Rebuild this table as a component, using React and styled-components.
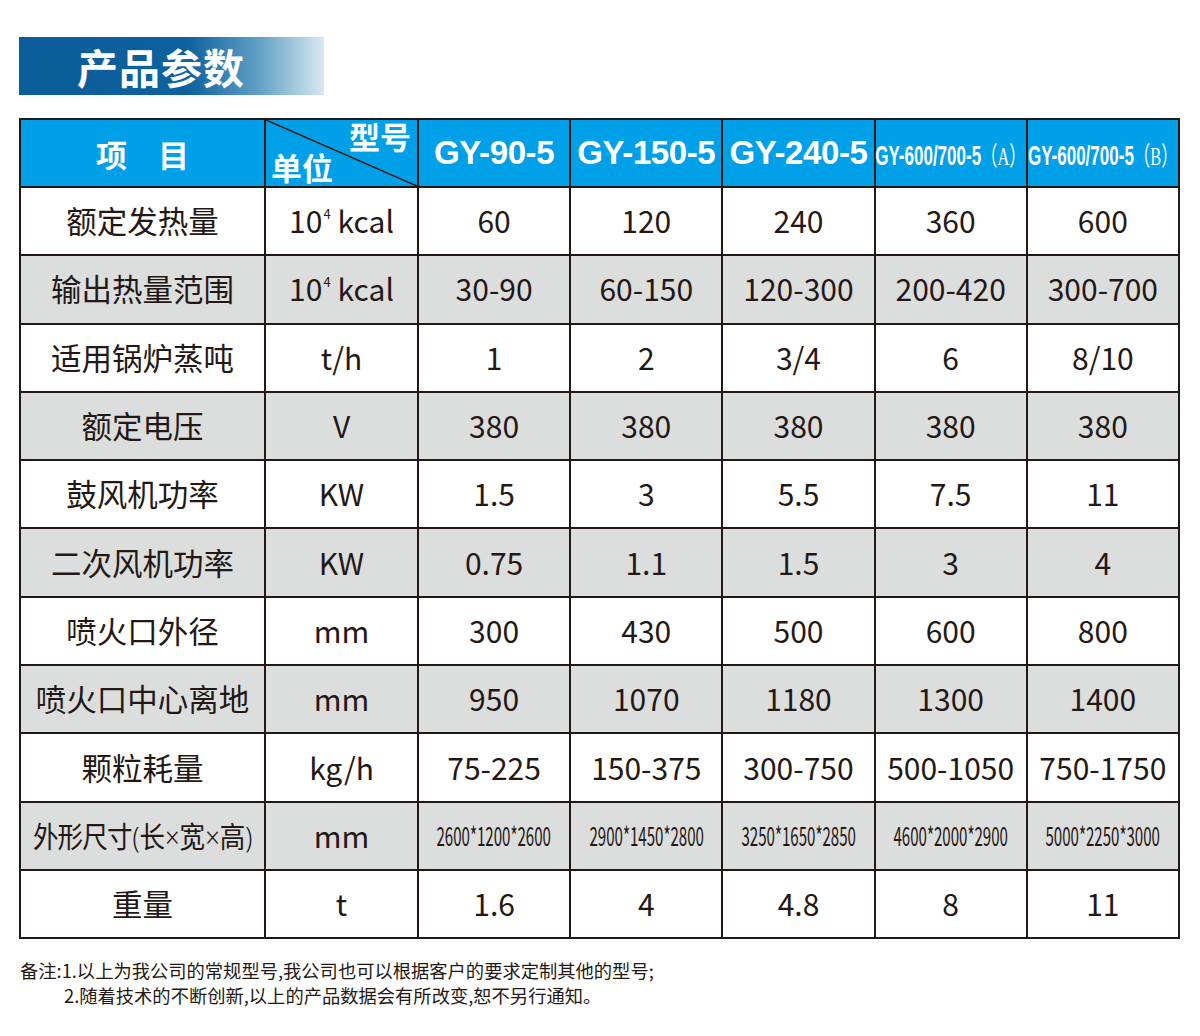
import React from 'react'
import styled, { createGlobalStyle } from 'styled-components'

const GlobalStyle = createGlobalStyle`
    body {
        margin: 0;
        background: #ffffff;
        font-family: "Noto Sans CJK SC", "Noto Sans", sans-serif;
        color: #231815;
    }
`

const models = [
    { name: 'GY-90-5' },
    { name: 'GY-150-5' },
    { name: 'GY-240-5' },
    { name: 'GY-600/700-5', tag: '（A）' },
    { name: 'GY-600/700-5', tag: '（B）' }
]

const rows = [
    { label: '额定发热量', unit: 'kcal', values: ['60', '120', '240', '360', '600'] },
    { label: '输出热量范围', unit: 'kcal', values: ['30-90', '60-150', '120-300', '200-420', '300-700'] },
    { label: '适用锅炉蒸吨', unit: 't/h', values: ['1', '2', '3/4', '6', '8/10'] },
    { label: '额定电压', unit: 'V', values: ['380', '380', '380', '380', '380'] },
    { label: '鼓风机功率', unit: 'KW', values: ['1.5', '3', '5.5', '7.5', '11'] },
    { label: '二次风机功率', unit: 'KW', values: ['0.75', '1.1', '1.5', '3', '4'] },
    { label: '喷火口外径', unit: 'mm', values: ['300', '430', '500', '600', '800'] },
    { label: '喷火口中心离地', unit: 'mm', values: ['950', '1070', '1180', '1300', '1400'] },
    { label: '颗粒耗量', unit: 'kg/h', values: ['75-225', '150-375', '300-750', '500-1050', '750-1750'] },
    { label: '外形尺寸', sizeLabel: true, unit: 'mm', narrow: true, values: ['2600*1200*2600', '2900*1450*2800', '3250*1650*2850', '4600*2000*2900', '5000*2250*3000'] },
    { label: '重量', unit: 't', values: ['1.6', '4', '4.8', '8', '11'] }
]

function Unit({ unit }) {
    if (unit === 'kcal') {
        return <span>10<Sup>4</Sup>kcal</span>
    }
    return <span>{unit}</span>
}

// 外形尺寸(长×宽×高) is set tighter than the other labels
function SizeLabel() {
    return (
        <Fit>
            <LabelTight>
                外形尺寸<Thin>(</Thin>长<Thin>×</Thin>宽<Thin>×</Thin>高<Thin>)</Thin>
            </LabelTight>
        </Fit>
    )
}

export default function App() {
    return (
        <Page>
            <GlobalStyle />
            <Banner>
                <BannerTitle>产品参数</BannerTitle>
            </Banner>

            <Table>
                <colgroup>
                    <col style={{ width: 245 }} />
                    <col style={{ width: 153 }} />
                    {models.map((m, i) => <col key={i} style={{ width: 152.2 }} />)}
                </colgroup>
                <thead>
                    <HeadRow>
                        <HeadCell>项　目</HeadCell>
                        <DiagCell>
                            <Slash viewBox="0 0 100 100" preserveAspectRatio="none">
                                <line x1="0" y1="0" x2="100" y2="100" stroke="#231815" strokeWidth="1.6" vectorEffect="non-scaling-stroke" />
                            </Slash>
                            <DiagTop>型号</DiagTop>
                            <DiagBottom>单位</DiagBottom>
                        </DiagCell>
                        {models.map((m, i) => (
                            <HeadCell key={i}>
                                <Fit>
                                    {m.tag
                                        ? <ModelNarrow>{m.name}<Tag>{m.tag}</Tag></ModelNarrow>
                                        : <Model>{m.name}</Model>}
                                </Fit>
                            </HeadCell>
                        ))}
                    </HeadRow>
                </thead>
                <tbody>
                    {rows.map((r, i) => (
                        <Row key={r.label} grey={i % 2 === 1}>
                            <Label>{r.sizeLabel ? <SizeLabel /> : r.label}</Label>
                            <Cell><Unit unit={r.unit} /></Cell>
                            {r.values.map((v, j) => (
                                <Cell key={j}>
                                    {r.narrow
                                        ? <Fit><Narrow>{v}</Narrow></Fit>
                                        : v}
                                </Cell>
                            ))}
                        </Row>
                    ))}
                </tbody>
            </Table>

            <Notes>
                <NoteLine>备注:1.以上为我公司的常规型号,我公司也可以根据客户的要求定制其他的型号;</NoteLine>
                <NoteLine indent>2.随着技术的不断创新,以上的产品数据会有所改变,恕不另行通知。</NoteLine>
            </Notes>
        </Page>
    )
}

const Page = styled.div`
    width: 1200px;
    padding: 37px 0 0 19px;
    box-sizing: border-box;
`

const Banner = styled.div`
    width: 305px;
    height: 58px;
    display: flex;
    align-items: center;
    padding-left: 58px;
    box-sizing: border-box;
    background: linear-gradient(90deg, #0b5d99 0%, #0d619d 55%, #5f9ec4 78%, #d9e8f1 100%);
`

const BannerTitle = styled.div`
    color: #ffffff;
    font-size: 41px;
    font-weight: 700;
    letter-spacing: 1px;
    line-height: 1;
`

const Table = styled.table`
    margin-top: 23px;
    width: 1159px;
    border-collapse: collapse;
    table-layout: fixed;
    border: 2px solid #231815;
`

const HeadRow = styled.tr`
    height: 68px;
    background: #00a0e9;
`

const HeadCell = styled.th`
    border: 2px solid #231815;
    padding: 0;
    color: #ffffff;
    font-size: 31px;
    font-weight: 700;
    text-align: center;
    vertical-align: middle;
    white-space: nowrap;
`

const DiagCell = styled.th`
    position: relative;
    border: 2px solid #231815;
    padding: 0;
    color: #ffffff;
    font-size: 31px;
    font-weight: 700;
`

const Slash = styled.svg`
    position: absolute;
    left: 0;
    top: 0;
    width: 100%;
    height: 100%;
`

const DiagTop = styled.span`
    position: absolute;
    right: 6px;
    top: -3px;
    line-height: 1.2;
`

const DiagBottom = styled.span`
    position: absolute;
    left: 5px;
    bottom: 1px;
    line-height: 1.2;
`

const Fit = styled.div`
    display: flex;
    justify-content: center;
    align-items: center;
    white-space: nowrap;
`

const Model = styled.span`
    font-family: "Liberation Sans", Arial, sans-serif;
    font-size: 33px;
    font-weight: 700;
    letter-spacing: -0.4px;
`

const ModelNarrow = styled.span`
    display: inline-block;
    flex-shrink: 0;
    font-family: "Liberation Sans", Arial, sans-serif;
    font-size: 27px;
    font-weight: 700;
    transform: scaleX(0.63);
`

const Tag = styled.span`
    font-family: "Liberation Serif", "Noto Sans CJK SC", serif;
    font-weight: 400;
    font-size: 26px;
`

const Row = styled.tr`
    height: 68.3px;
    background: ${p => (p.grey ? '#dcdddd' : '#ffffff')};
`

const Cell = styled.td`
    border: 2px solid #231815;
    padding: 0 0 2px;
    text-align: center;
    vertical-align: middle;
    font-size: 30px;
    font-weight: 400;
    color: #231815;
    white-space: nowrap;
`

const Label = styled(Cell)`
    font-size: 30.5px;
`

const LabelTight = styled.span`
    display: inline-block;
    flex-shrink: 0;
    font-size: 29px;
    letter-spacing: -1px;
    transform: scaleX(0.88);
`

const Thin = styled.span`
    font-family: "Noto Sans", sans-serif;
    font-weight: 300;
    margin: 0 1px;
`

const Sup = styled.sup`
    font-size: 13px;
    line-height: 1;
    vertical-align: top;
    position: relative;
    top: 9px;
    margin: 0 7px 0 1px;
`

const Narrow = styled.span`
    display: inline-block;
    flex-shrink: 0;
    font-size: 26px;
    transform: scaleX(0.58);
`

const Notes = styled.div`
    margin-top: 19px;
    padding-left: 1px;
    font-size: 18.3px;
    line-height: 25px;
    color: #231815;
`

const NoteLine = styled.div`
    padding-left: ${p => (p.indent ? '44px' : '0')};
`
